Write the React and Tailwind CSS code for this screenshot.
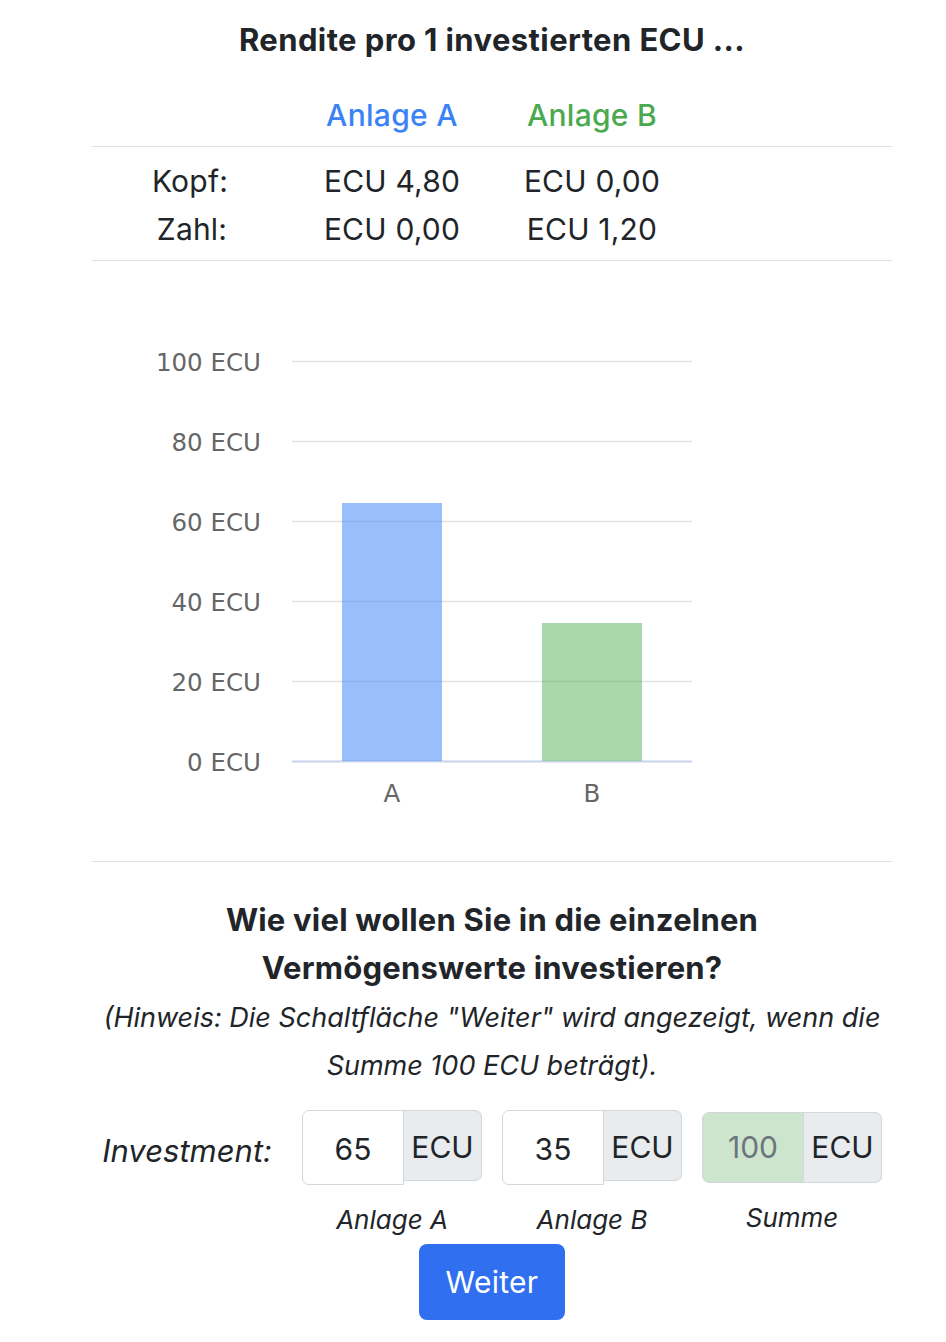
import React from "react";

const FONT = { fontFamily: "Inter, 'Noto Sans', 'Liberation Sans', sans-serif" };

function Chart() {
  const ticks = [100, 80, 60, 40, 20, 0];
  const y = (v) => 500 - v * 4;
  return (
    <svg width="800" height="600" viewBox="0 0 800 600" className="block">
      {ticks.map((t) => (
        <g key={t}>
          <line
            x1="200"
            x2="600"
            y1={y(t) + 0.5}
            y2={y(t) + 0.5}
            stroke={t === 0 ? "#c6d3ea" : "#e4e4e4"}
            strokeWidth={t === 0 ? 2 : 1.5}
          />
          <text
            x="169"
            y={y(t) + 10}
            textAnchor="end"
            fill="#666666"
            fontSize="24.5"
            fontFamily="'DejaVu Sans', sans-serif"
          >
            {t} ECU
          </text>
        </g>
      ))}
      <rect x="250" y={y(65) + 2} width="100" height={65 * 4 - 2} fill="#3b82f6" fillOpacity="0.52" />
      <rect x="450" y={y(35) + 2} width="100" height={35 * 4 - 2} fill="#4caf50" fillOpacity="0.48" />
      <text x="300" y="541" textAnchor="middle" fill="#666666" fontSize="24.5" fontFamily="'DejaVu Sans', sans-serif">A</text>
      <text x="500" y="541" textAnchor="middle" fill="#666666" fontSize="24.5" fontFamily="'DejaVu Sans', sans-serif">B</text>
    </svg>
  );
}

function InputGroup({ value, sum }) {
  return (
    <div className={`flex ${sum ? "mt-[2px]" : ""}`}>
      <div
        className={`w-[102px] flex items-center justify-center border border-[#d3d7dc] rounded-l-[7px] text-[30px] ${
          sum ? "h-[71px] bg-[#cce5cc] text-[#6c757d]" : "h-[75px] pt-[4px] bg-white text-[#212529]"
        }`}
      >
        {value}
      </div>
      <div
        className={`w-[78px] h-[71px] flex items-center justify-center border border-l-0 border-[#d3d7dc] rounded-r-[7px] bg-[#e9ecef] text-[30px] text-[#212529] ${
          sum ? "" : "pt-[3px]"
        }`}
      >
        ECU
      </div>
    </div>
  );
}

export default function App() {
  return (
    <div className="bg-white min-h-[1342px] text-[#212529]" style={FONT}>
      <div className="ml-[92px] w-[800px]">
        <div className="h-[80px] flex items-center justify-center text-[31px] font-bold tracking-[0.4px]">
          Rendite pro 1 investierten ECU ...
        </div>
        <div className="grid grid-cols-4 h-[67px] items-center pt-[4px] text-[30px] font-medium tracking-[0.3px] text-center border-b border-[#dee2e6]">
          <div></div>
          <div className="text-[#3b82f6]">Anlage A</div>
          <div className="text-[#4ba94f]">Anlage B</div>
          <div></div>
        </div>
        <div className="pt-[10px] pb-[7px] border-b border-[#dee2e6] text-[30px] tracking-[0.2px] leading-[48px] text-center">
          <div className="grid grid-cols-4">
            <div className="pr-[4px]">Kopf:</div>
            <div>ECU 4,80</div>
            <div>ECU 0,00</div>
            <div></div>
          </div>
          <div className="grid grid-cols-4">
            <div>Zahl:</div>
            <div>ECU 0,00</div>
            <div>ECU 1,20</div>
            <div></div>
          </div>
        </div>
        <div className="border-b border-[#dee2e6]">
          <Chart />
        </div>
        <div className="pt-[34px] text-center text-[31px] font-bold tracking-[0.2px] leading-[48px]">
          Wie viel wollen Sie in die einzelnen
          <br />
          Vermögenswerte investieren?
        </div>
        <div className="text-center text-[27px] italic leading-[48px] pt-[2px]">
          (Hinweis: Die Schaltfläche "Weiter" wird angezeigt, wenn die
          <br />
          Summe 100 ECU beträgt).
        </div>
        <div className="grid grid-cols-4 mt-[20px] items-start">
          <div className="h-[75px] flex items-center justify-end pr-[20px] pt-[8px] text-[31px] italic">Investment:</div>
          <div className="px-[10px]">
            <InputGroup value="65" />
          </div>
          <div className="px-[10px]">
            <InputGroup value="35" />
          </div>
          <div className="px-[10px]">
            <InputGroup value="100" sum />
          </div>
        </div>
        <div className="grid grid-cols-4 text-center text-[26px] italic leading-[40px] mt-[15px]">
          <div></div>
          <div>Anlage A</div>
          <div>Anlage B</div>
          <div className="-mt-[2px]">Summe</div>
        </div>
        <div className="flex justify-center mt-[4px]">
          <button className="w-[146px] h-[76px] rounded-[8px] bg-[#2f6ff0] text-white text-[30px] tracking-[0.3px]">
            Weiter
          </button>
        </div>
      </div>
    </div>
  );
}
